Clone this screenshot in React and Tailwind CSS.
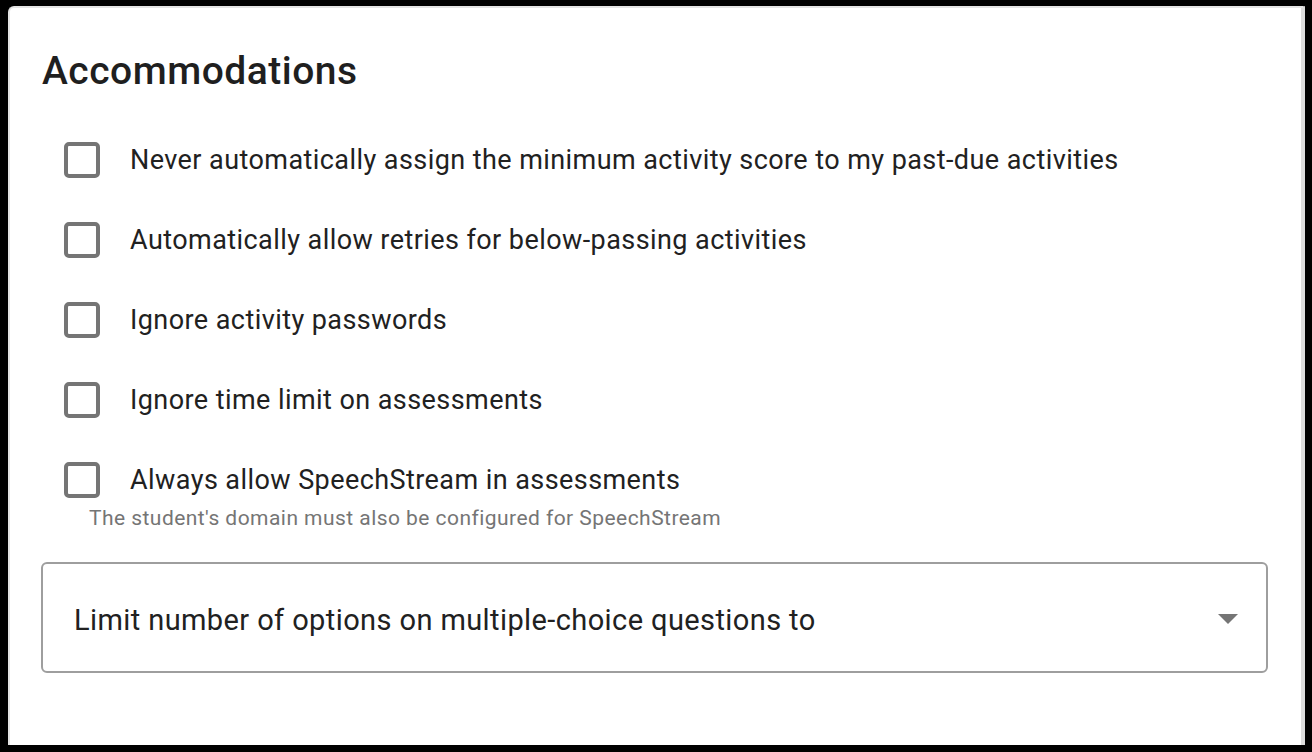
import React from "react";

const items = [
  "Never automatically assign the minimum activity score to my past-due activities",
  "Automatically allow retries for below-passing activities",
  "Ignore activity passwords",
  "Ignore time limit on assessments",
  "Always allow SpeechStream in assessments",
];

function Box() {
  return (
    <span className="block w-[36px] h-[36px] border-[4px] border-[#757575] rounded-[5px] bg-white shrink-0" />
  );
}

export default function App() {
  return (
    <div
      className="w-[1312px] h-[752px] bg-black pl-[8px] pt-[6px] pr-[7px] pb-[7px]"
      style={{ fontFamily: "Roboto, 'Noto Sans', sans-serif" }}
    >
      <div className="w-full h-full bg-white rounded-tl-[6px] border-l-2 border-t-2 border-[#e4e4e4] border-r-[4px] border-r-[#dcdcdc] pl-[32px] pr-[32px] pt-[40px]">
        <h2 className="text-[39px] leading-[46px] font-medium text-[#1f1f1f] tracking-[0.5px]">
          Accommodations
        </h2>
        <div className="mt-[38px] flex flex-col gap-[24px] pl-[22px]">
          {items.map((t) => (
            <label key={t} className="h-[56px] flex items-center gap-[30px]">
              <Box />
              <span className="text-[27px] leading-[32px] tracking-[0.43px] text-[#212121]">{t}</span>
            </label>
          ))}
        </div>
        <div className="pl-[47px] mt-0 text-[21px] leading-[20px] tracking-[0.45px] text-[#757575]">
          The student's domain must also be configured for SpeechStream
        </div>
        <div className="mt-[34px] ml-[-1px] w-[1227px] h-[111px] border-2 border-[#9e9e9e] rounded-[6px] flex items-center justify-between pl-[31px] pr-[28px]">
          <span className="mt-[5px] text-[29px] leading-[34px] tracking-[0.4px] text-[#212121]">
            Limit number of options on multiple-choice questions to
          </span>
          <svg width="20" height="10" viewBox="0 0 20 10" className="mt-[2px]">
            <path d="M0 0 L20 0 L10 10 Z" fill="#757575" />
          </svg>
        </div>
      </div>
    </div>
  );
}
